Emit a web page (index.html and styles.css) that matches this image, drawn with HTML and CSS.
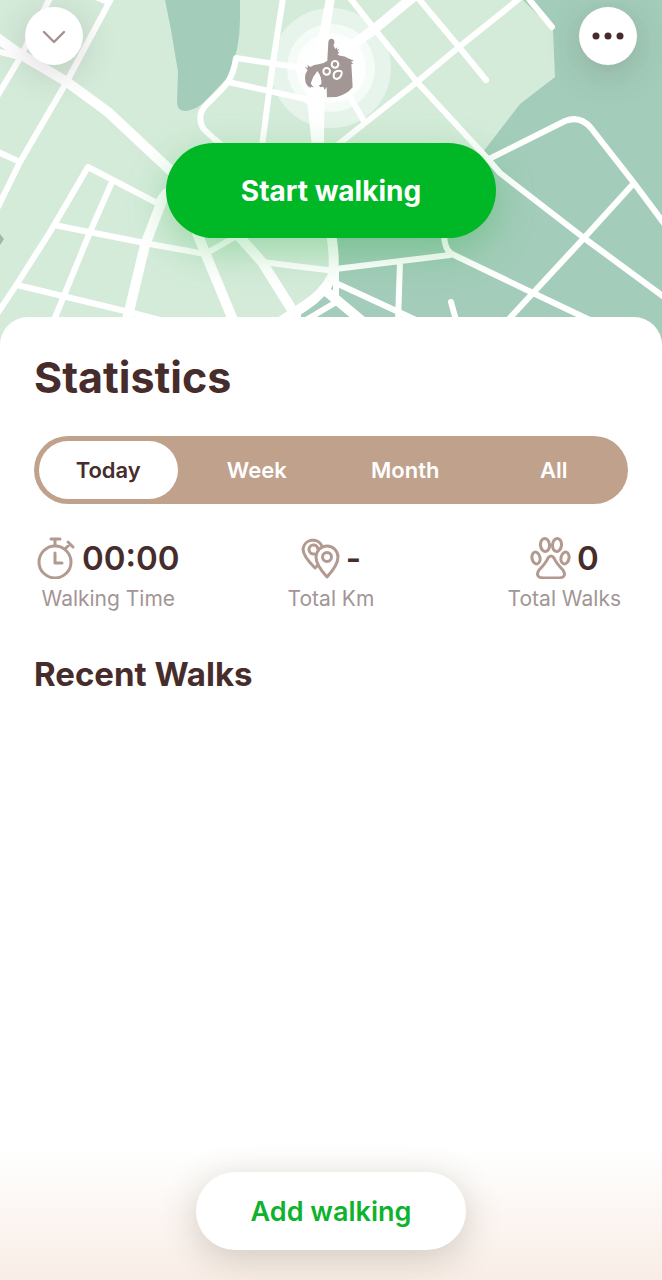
FILE: index.html
```
<!doctype html>
<html lang="en">
<head>
<meta charset="utf-8">
<meta name="viewport" content="width=device-width, initial-scale=1">
<title>Walking</title>
<link rel="stylesheet" href="styles.css">
</head>

<body>
<header class="mapArea">
	<svg class="map" viewBox="0 0 662 347" preserveAspectRatio="xMidYMin slice" aria-hidden="true">
		<rect width="662" height="347" fill="#d4ebda"/>
		<!-- parks -->
		<g fill="#a3cdba">
			<path d="M165 0L171 30L178 72L177 103Q178 112 187 111Q199 109 209 97L228 77Q240 50 240 20V0Z"/>
			<path d="M523 0L553 30L555 77L520 104L483 152L345 190L335 225L336 265L325 293L295 320L0 347H662V0Z"/>
			<path d="M0 318H300V347H0Z" fill="#d4ebda"/>
			<path d="M0 234L4 239L0 245Z" fill="#9fb9a8"/>
		</g>
		<g class="roads">
			<path d="M0 52L20 57M50 -2L20 58L-2 95M98 -2L108 2M112 -3L66 83L20 162L-2 207M-2 152L20 162"/>
			<path d="M157 203L88 167L50 232L15 287L-3 314M165 192L157 203M112 182L90 232L54 320M54 225L150 244L205 254L235 237M17 285L125 311L160 320"/>
			<path d="M283 -2L273 62L262 146M303 68L236 58Q234 72 228 82Q222 90 207 104Q196 115 203 128Q207 133 224 147M228 82L310 100"/>
			<path d="M350 -2L377 32L417 82L487 158L500 173L584 238L664 297M418 -2L459 47L486 80M520 -2L459 47L417 82L365 123L335 147M365 123L350 97M528 -2L552 27"/>
			<path d="M487 160L565 121Q580 115 591 128L634 183L666 226M634 183L584 238L533 293L508 320M444 236Q445 252 454 255L533 293L592 321M262 262L327 270L450 255M400 262L398 320M451 302L456 320"/>
			<path d="M336 270V300M338 284L416 320M338 301L306 320"/>
		</g>
		<g class="roads wide">
			<path d="M-4 37L20 54L67 82L108 112L170 170M163 198L145 245L127 320M197 233L233 320M236 233L262 262L296 316M412 -2L372 31L345 50"/>
			<path d="M331 233Q336 265 332 277Q324 293 306 305L280 322M326 291L362 321"/>
		</g>
		<path d="M326 -2L318 40L306 90L312 147H324L325 60L335 -2Z" fill="#fff"/>
		<!-- position marker -->
		<circle cx="331" cy="68" r="60" fill="#fff" opacity=".45"/>
		<circle cx="331" cy="68" r="44" fill="#fff" opacity=".6"/>
		<circle cx="331" cy="68" r="35" fill="#fff" opacity=".8"/>
		<g transform="translate(300 34) scale(.3333)">
			<path fill="#a39795" d="M82 80L85 24Q88 12 98 15Q105 19 103 28Q98 34 103 40L106 45L112 40L111 48L118 45L113 53L119 56L112 60Q114 64 120 65Q136 66 144 73L162 80L153 83L160 89L154 90L158 160Q140 182 110 189L81 190L80 158L74 168L70 158L62 160L56 155L64 150Q66 130 52 112Q38 128 33 146Q34 156 44 160L30 158L35 163Q16 158 15 132Q15 118 23 108L15 99L24 102L22 92L31 99Q42 91 56 91Q70 90 82 80Z"/>
			<path fill="#fff" d="M52 112L34 146Q35 156 46 160L56 155L62 150Q66 130 52 112Z"/>
			<g fill="none" stroke="#fff" stroke-width="6">
				<circle cx="105" cy="91" r="10"/>
				<circle cx="80" cy="112" r="10"/>
				<path d="M101 126Q100 114 112 111Q127 108 125 119Q122 132 110 135Q101 134 101 126Z"/>
			</g>
		</g>
	</svg>
	<div class="topBar">
		<button class="roundBtn" aria-label="Close">
			<svg width="24" height="24" viewBox="0 0 24 24"><path d="M2 8L12 18L22 8" fill="none" stroke="#a39191" stroke-width="2.4" stroke-linecap="round" stroke-linejoin="round"/></svg>
		</button>
		<button class="roundBtn" aria-label="More">
			<svg width="32" height="8" viewBox="0 0 32 8" fill="#472c2c"><circle cx="4" cy="4" r="3.5"/><circle cx="16" cy="4" r="3.5"/><circle cx="28" cy="4" r="3.5"/></svg>
		</button>
	</div>
	<button class="startBtn">Start walking</button>
</header>

<main class="sheet">
	<h1>Statistics</h1>
	<div class="tabs">
		<button class="tab active">Today</button>
		<button class="tab">Week</button>
		<button class="tab">Month</button>
		<button class="tab">All</button>
	</div>
	<div class="stats">
		<div class="stat">
			<div class="value">
				<svg class="icon" width="40" height="42" viewBox="0 0 40 42">
					<circle cx="18" cy="25" r="16"/>
					<path d="M14 2H23M18 2V8M18 16V26H25M28 12L33 7M31 5L36 10"/>
				</svg>
				<span>00:00</span>
			</div>
			<div class="label">Walking Time</div>
		</div>
		<div class="stat">
			<div class="value">
				<svg class="icon" width="40" height="42" viewBox="0 0 40 42">
					<path d="M17 28L14 31Q2 19 2 12A10 10 0 0 1 21 9"/>
					<path d="M17 12A4.500 4.500 0 1 0 13 17"/>
					<path d="M26 40Q15 28 15 20A11 11 0 0 1 37 20Q37 28 26 40Z"/>
					<circle cx="26" cy="20" r="4.500"/>
				</svg>
				<span>-</span>
			</div>
			<div class="label">Total Km</div>
		</div>
		<div class="stat">
			<div class="value">
				<svg class="icon" width="42" height="42" viewBox="0 0 42 42">
					<ellipse cx="15" cy="8" rx="4.500" ry="6.500" transform="rotate(-6 15 8)"/>
					<ellipse cx="27" cy="8" rx="4.500" ry="6.500" transform="rotate(6 27 8)"/>
					<ellipse cx="6" cy="21" rx="4" ry="6" transform="rotate(-12 6 21)"/>
					<ellipse cx="35" cy="21" rx="4" ry="6" transform="rotate(12 35 21)"/>
					<path d="M18 21Q21 17 24 21Q26 26 33 33Q36 38 33 40Q32 41 21 41Q10 41 9 40Q6 38 9 33Q16 26 18 21Z"/>
				</svg>
				<span>0</span>
			</div>
			<div class="label">Total Walks</div>
		</div>
	</div>
	<h2>Recent Walks</h2>
</main>

<footer class="bottomBar">
	<button class="addBtn">Add walking</button>
</footer>
</body>
</html>
```
FILE: styles.css
```
*{
	box-sizing: border-box;
}

body{
	margin: 0;
	min-height: 100vh;
	display: flex;
	flex-direction: column;
	background: #ffffff;
	color: #472c2c;
	font-family: Inter, "Liberation Sans", sans-serif;
}

button{
	border: 0;
	padding: 0;
	font-family: inherit;
	cursor: pointer;
}

.mapArea{
	position: relative;
	height: 347px;
	display: flex;
	flex-direction: column;
	align-items: center;
	gap: 78px;
	overflow: hidden;
}

.map{
	position: absolute;
	top: 0;
	left: 0;
	width: 100%;
	height: 100%;
}

.roads{
	fill: none;
	stroke: #ffffff;
	stroke-width: 6;
	stroke-linecap: round;
	stroke-linejoin: round;
}

.wide{
	stroke-width: 10;
}

.topBar{
	position: relative;
	width: 100%;
	padding: 7px 25px 0;
	display: flex;
	justify-content: space-between;
}

.roundBtn{
	width: 58px;
	height: 58px;
	border-radius: 50%;
	display: flex;
	align-items: center;
	justify-content: center;
	background: #ffffff;
	box-shadow: 0 8px 36px rgba(71,44,44,0.2);
}

.startBtn{
	position: relative;
	width: 330px;
	height: 95px;
	border-radius: 48px;
	background: #00b825;
	color: #ffffff;
	font-size: 28px;
	font-weight: 700;
	box-shadow: 0 12px 40px rgba(0,160,30,0.28);
}

.sheet{
	position: relative;
	flex: 1;
	margin-top: -30px;
	padding: 36px 34px 0;
	border-radius: 28px 28px 0 0;
	background: #ffffff;
}

h1{
	margin: 0 0 35px;
	font-size: 43px;
	line-height: 48px;
}

h2{
	margin: 38px 0 0;
	font-size: 33px;
	line-height: 40px;
}

.tabs{
	height: 68px;
	padding: 5px;
	display: flex;
	gap: 10px;
	border-radius: 34px;
	background: #bfa18c;
}

.tab{
	flex: 1;
	border-radius: 29px;
	background: none;
	color: #ffffff;
	font-size: 22px;
	font-weight: 600;
}

.active{
	background: #ffffff;
	color: #472c2c;
}

.stats{
	margin-top: 30px;
	padding: 0 3px;
	display: grid;
	grid-template-columns: 1fr auto 1fr;
}

.stat{
	display: flex;
	flex-direction: column;
	align-items: center;
	justify-self: start;
}

.stat:last-child{
	padding-right: 4px;
	justify-self: end;
}

.value{
	height: 48px;
	display: flex;
	align-items: center;
	gap: 5px;
	font-size: 33px;
	font-weight: 600;
}

.icon{
	fill: none;
	stroke: #b39a90;
	stroke-width: 3;
	stroke-linecap: round;
	stroke-linejoin: round;
}

.label{
	font-size: 21px;
	line-height: 34px;
	color: #a39595;
}

.bottomBar{
	position: relative;
	padding: 22px 0 30px;
	display: flex;
	justify-content: center;
	background: linear-gradient(#ffffff, #f9ede6);
}

.addBtn{
	width: 270px;
	height: 78px;
	border-radius: 39px;
	background: #ffffff;
	color: #0fb22d;
	font-size: 27px;
	font-weight: 600;
	box-shadow: 0 8px 36px rgba(60,60,30,0.22);
}
```
